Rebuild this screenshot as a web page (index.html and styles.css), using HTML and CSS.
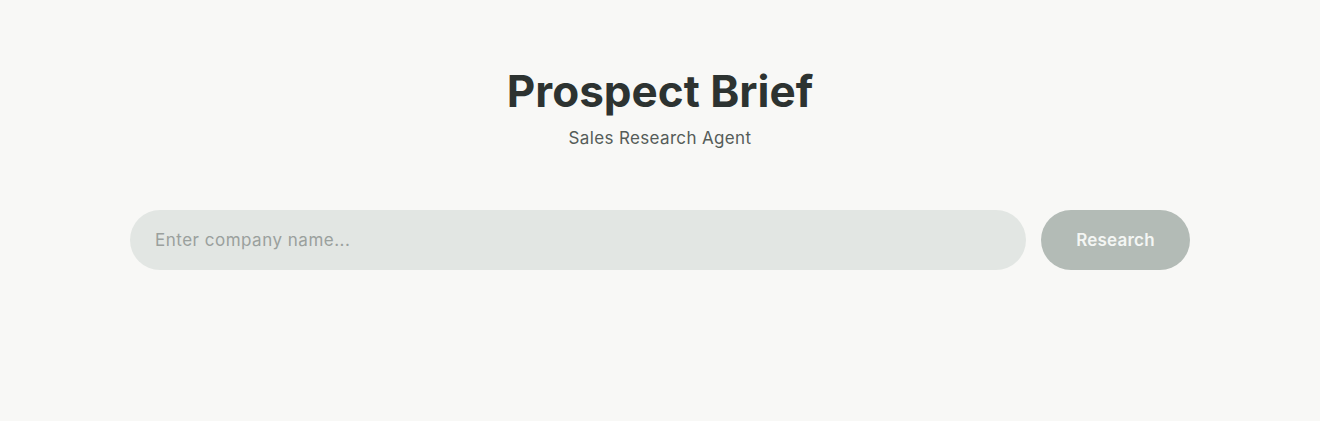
FILE: index.html
```html
<!DOCTYPE html>
<html lang="en">
<head>
<meta charset="utf-8">
<title>Prospect Brief</title>
<link rel="stylesheet" href="styles.css">
</head>
<body>
<main class="page">
  <header class="hero">
    <h1 class="title">Prospect Brief</h1>
    <p class="subtitle">Sales Research Agent</p>
  </header>
  <form class="search" onsubmit="return false;">
    <input class="search-input" type="text" placeholder="Enter company name...">
    <button class="search-btn" type="submit" disabled>Research</button>
  </form>
</main>
</body>
</html>
```
FILE: styles.css
```css
* { box-sizing: border-box; }
html, body {
  margin: 0;
  padding: 0;
  background: #f8f8f6;
  font-family: "Inter", "Noto Sans", sans-serif;
  color: #2d3331;
}
.page {
  max-width: 1060px;
  margin: 0 auto;
  padding: 63px 0 0;
}
.hero {
  text-align: center;
}
.title {
  margin: 0;
  font-size: 44px;
  font-weight: 700;
  line-height: 56px;
  color: #2d3331;
}
.subtitle {
  margin: 7px 0 0;
  font-size: 17px;
  line-height: 24px;
  letter-spacing: 0.35px;
  color: #555c59;
}
.search {
  display: flex;
  gap: 15px;
  margin-top: 60px;
}
.search-input {
  flex: 1;
  height: 60px;
  border: none;
  border-radius: 30px;
  background: #e2e6e3;
  padding: 0 25px;
  font-family: inherit;
  font-size: 17px;
  letter-spacing: 0.5px;
  color: #2d3331;
  outline: none;
}
.search-input::placeholder { color: #9aa09d; }
.search-btn {
  width: 149px;
  height: 60px;
  border: none;
  border-radius: 30px;
  background: #b3bbb6;
  color: #f4f6f4;
  font-family: inherit;
  font-size: 17px;
  font-weight: 600;
  letter-spacing: 0.2px;
}
```
